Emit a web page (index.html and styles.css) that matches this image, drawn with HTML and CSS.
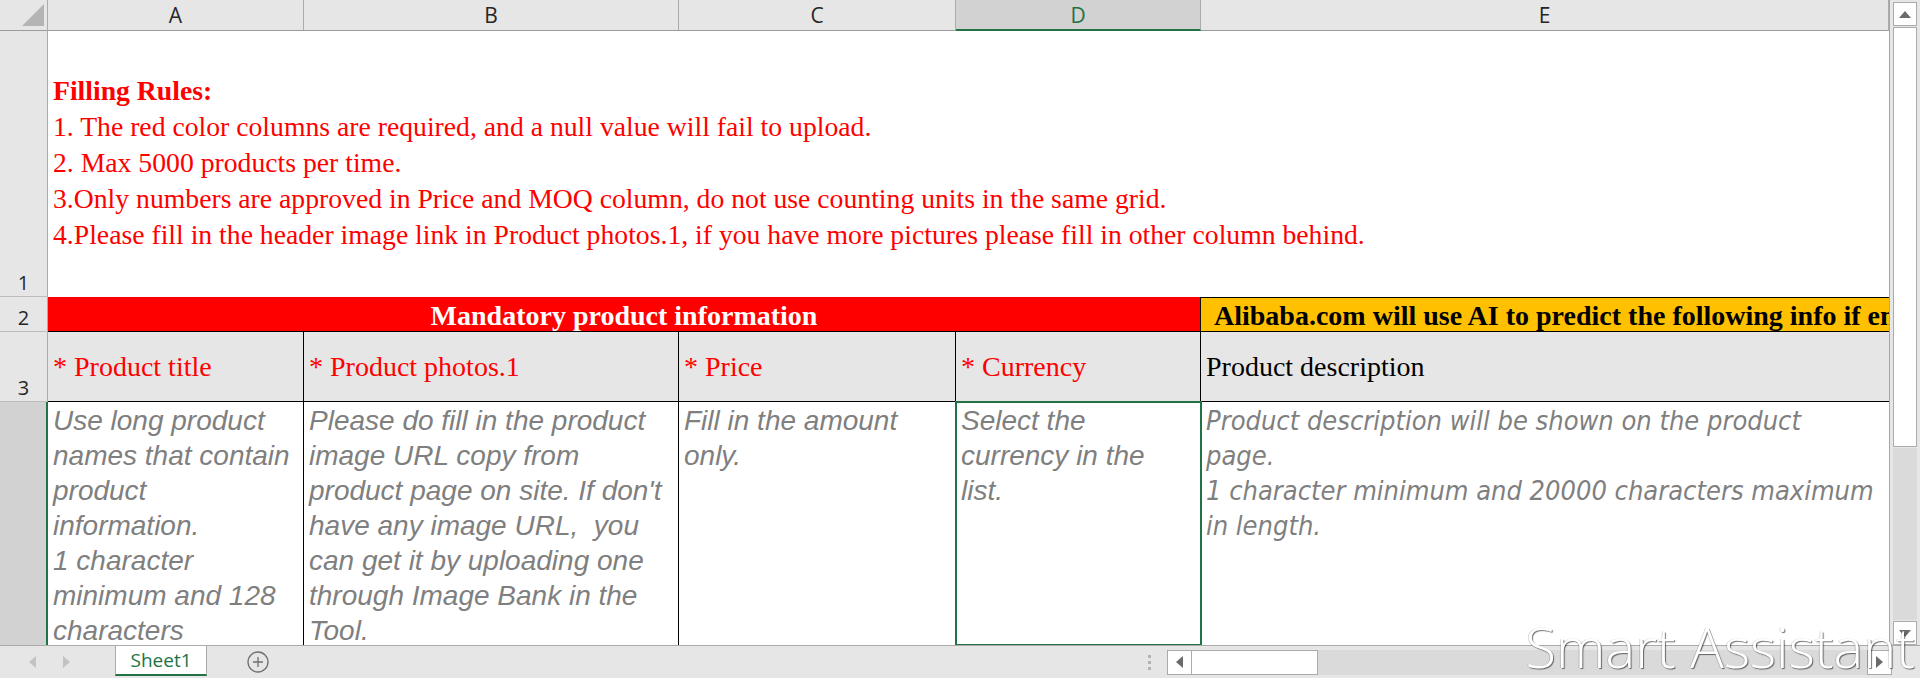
FILE: index.html
```html
<!DOCTYPE html>
<html lang="en">

<head>
    <meta charset="UTF-8">
    <title>Product upload template - Sheet1</title>
    <link rel="stylesheet" href="styles.css">
</head>

<body>

    <div class="workbook">
        <div class="main">
            <div class="grid">
                <!-- column headers -->
                <div class="corner">
                    <svg width="22" height="22" viewBox="0 0 22 22"><polygon points="0,22 22,0 22,22" fill="#b4b4b4"/></svg>
                </div>
                <div class="col-head">A</div>
                <div class="col-head">B</div>
                <div class="col-head">C</div>
                <div class="col-head current">D</div>
                <div class="col-head">E</div>

                <!-- row 1: rules -->
                <div class="row-head">1</div>
                <div class="rules">
                    <b>Filling Rules:</b><br>
                    1. The red color columns are required, and a null value will fail to upload.<br>
                    2. Max 5000 products per time.<br>
                    3.Only numbers are approved in Price and MOQ column, do not use counting units in the same grid.<br>
                    4.Please fill in the header image link in Product photos.1, if you have more pictures please fill in other column behind.
                </div>

                <!-- row 2: groups -->
                <div class="row-head">2</div>
                <div class="band mandatory">Mandatory product information</div>
                <div class="band ai">Alibaba.com will use AI to predict the following info if empty</div>

                <!-- row 3: field names -->
                <div class="row-head">3</div>
                <div class="field required">* Product title</div>
                <div class="field required">* Product photos.1</div>
                <div class="field required">* Price</div>
                <div class="field required">* Currency</div>
                <div class="field edge">Product description</div>

                <!-- row 4: hints -->
                <div class="row-head current"></div>
                <div class="hint">Use long product<br>names that contain<br>product<br>information.<br>1 character<br>minimum and 128<br>characters</div>
                <div class="hint">Please do fill in the product<br>image URL copy from<br>product page on site. If don't<br>have any image URL,&nbsp; you<br>can get it by uploading one<br>through Image Bank in the<br>Tool.</div>
                <div class="hint">Fill in the amount<br>only.</div>
                <div class="hint selected">Select the<br>currency in the<br>list.</div>
                <div class="hint wide edge">Product description will be shown on the product<br>page.<br>1 character minimum and 20000 characters maximum<br>in length.</div>
            </div>

            <div class="vscroll">
                <div class="sb-btn"><span class="tri up"></span></div>
                <div class="sb-thumb"></div>
                <div class="sb-track"></div>
                <div class="sb-btn"><span class="tri down"></span></div>
            </div>
        </div>

        <div class="tabbar">
            <div class="tab-nav">
                <span class="tri left light"></span>
                <span class="tri right light"></span>
            </div>
            <div class="sheet-tab">Sheet1</div>
            <div class="add-sheet">
                <svg width="22" height="22" viewBox="0 0 22 22">
                    <circle cx="11" cy="11" r="10" fill="none" stroke="#6f6f6f" stroke-width="1.3"/>
                    <path d="M11 6v10M6 11h10" stroke="#6f6f6f" stroke-width="1.3"/>
                </svg>
            </div>
            <div class="spacer"></div>
            <div class="grip"><span></span><span></span><span></span></div>
            <div class="hscroll">
                <div class="sb-btn"><span class="tri left"></span></div>
                <div class="sb-thumb"></div>
                <div class="sb-track"></div>
                <div class="sb-btn"><span class="tri right"></span></div>
            </div>
        </div>

        <div class="watermark">Smart Assistant</div>
    </div>

</body>

</html>
```

FILE: styles.css
```css
* {
    box-sizing: border-box;
}

html,
body {
    margin: 0;
}

body {
    width: 1920px;
    height: 678px;
    overflow: hidden;
    background: #fff;
    font-family: 'Open Sans', sans-serif;
}

.workbook {
    position: relative;
    height: 678px;
    display: flex;
    flex-direction: column;
}

.main {
    display: flex;
    height: 645px;
}

/* sheet grid */
.grid {
    display: grid;
    grid-template-columns: 48px 256px 375px 277px 245px 688px;
    grid-template-rows: 31px 266px 35px 70px 243px;
    border-right: 1px solid #a6a6a6;
}

.corner {
    background: #e6e6e6;
    border-right: 1px solid #ababab;
    border-bottom: 1px solid #9b9b9b;
    display: flex;
    justify-content: flex-end;
    align-items: flex-end;
    padding: 0 3px 4px 0;
}

.corner svg {
    display: block;
}

.col-head {
    background: #e6e6e6;
    border-right: 1px solid #ababab;
    border-bottom: 1px solid #9b9b9b;
    display: flex;
    align-items: center;
    justify-content: center;
    font-size: 21px;
    color: #262626;
}

.col-head:last-child {
    border-right: none;
}

.col-head.current {
    background: #d2d2d2;
    color: #217346;
    border-bottom: 2px solid #217346;
}

.row-head {
    background: #e6e6e6;
    border-right: 1px solid #ababab;
    border-bottom: 1px solid #bdbdbd;
    display: flex;
    align-items: flex-end;
    justify-content: center;
    font-size: 20px;
    line-height: 1;
    padding-bottom: 3px;
    color: #262626;
}

.row-head.current {
    background: #d2d2d2;
    border-right: 2px solid #217346;
    border-bottom: none;
}

.rules {
    grid-column: 2 / 7;
    padding: 42px 5px 0;
    font-family: 'Liberation Serif', serif;
    font-size: 27.7px;
    line-height: 36px;
    color: #f00;
    white-space: nowrap;
    overflow: hidden;
}

.band {
    display: flex;
    align-items: flex-end;
    font-family: 'Liberation Serif', serif;
    font-weight: bold;
    font-size: 28px;
    line-height: 31px;
    white-space: nowrap;
    overflow: hidden;
    border-bottom: 1px solid #000;
}

.band.mandatory {
    grid-column: 2 / 6;
    justify-content: center;
    background: #f00;
    color: #fff;
    border-right: 1px solid #000;
}

.band.ai {
    background: #ffc000;
    color: #000;
    border-top: 1px solid #000;
    padding-left: 13px;
}

.field {
    display: flex;
    align-items: center;
    padding-left: 5px;
    background: #e7e6e6;
    border-right: 1px solid #000;
    border-bottom: 1px solid #000;
    font-family: 'Liberation Serif', serif;
    font-size: 28px;
    line-height: 31px;
    white-space: nowrap;
    overflow: hidden;
    color: #000;
}

.field.required {
    color: #f00;
}

.hint {
    padding: 1px 5px 0;
    border-right: 1px solid #000;
    font-family: 'Liberation Sans', Arial, sans-serif;
    font-style: italic;
    font-size: 28px;
    line-height: 35px;
    color: #7f7f7f;
    white-space: nowrap;
    overflow: hidden;
}

.hint.wide {
    font-family: 'DejaVu Sans Condensed', 'DejaVu Sans', sans-serif;
    font-size: 27px;
}

.hint.selected {
    outline: 2px solid #217346;
    outline-offset: -1px;
}

.edge {
    border-right: none;
}

/* scroll bars */
.vscroll {
    width: 30px;
    background: #e6e6e6;
    display: flex;
    flex-direction: column;
    padding: 2px 3px 0;
    gap: 1px;
}

.sb-btn {
    display: flex;
    align-items: center;
    justify-content: center;
    background: #fff;
    border: 1px solid #ababab;
}

.vscroll .sb-btn {
    height: 24px;
}

.vscroll .sb-thumb {
    height: 420px;
    background: #fff;
    border: 1px solid #ababab;
}

.sb-track {
    flex: 1;
    background: #dadada;
}

.tri {
    width: 0;
    height: 0;
    border-style: solid;
    border-color: transparent;
}

.tri.up {
    border-width: 0 6px 7px;
    border-bottom-color: #6a6a6a;
}

.tri.down {
    border-width: 7px 6px 0;
    border-top-color: #6a6a6a;
}

.tri.left {
    border-width: 6px 7px 6px 0;
    border-right-color: #6a6a6a;
}

.tri.right {
    border-width: 6px 0 6px 7px;
    border-left-color: #6a6a6a;
}

.tri.left.light {
    border-right-color: #c3c3c3;
}

.tri.right.light {
    border-left-color: #c3c3c3;
}

/* sheet tabs */
.tabbar {
    height: 33px;
    display: flex;
    background: #e6e6e6;
    border-top: 1px solid #ababab;
}

.tab-nav {
    width: 115px;
    display: flex;
    align-items: center;
    gap: 27px;
    padding-left: 29px;
}

.sheet-tab {
    width: 92px;
    margin-bottom: 2px;
    display: flex;
    align-items: center;
    justify-content: center;
    background: #fff;
    border-left: 1px solid #ababab;
    border-right: 1px solid #ababab;
    border-bottom: 2px solid #217346;
    font-size: 19px;
    color: #217346;
}

.add-sheet {
    margin-left: 40px;
    display: flex;
    align-items: center;
}

.add-sheet svg {
    display: block;
}

.spacer {
    flex: 1;
}

.grip {
    display: flex;
    flex-direction: column;
    justify-content: center;
    gap: 3px;
    margin-right: 16px;
}

.grip span {
    width: 3px;
    height: 3px;
    background: #b3b3b3;
}

.hscroll {
    width: 725px;
    height: 25px;
    align-self: center;
    display: flex;
    margin-right: 28px;
}

.hscroll .sb-btn {
    width: 25px;
}

.hscroll .sb-thumb {
    width: 126px;
    background: #fff;
    border: 1px solid #ababab;
    border-left: none;
}

/* assistant overlay text */
.watermark {
    position: absolute;
    right: 5px;
    bottom: 4px;
    font-weight: 300;
    font-size: 56px;
    line-height: 1;
    color: #fff;
    text-shadow: 1px 1px 1px rgba(0, 0, 0, 0.55), -1px 0 0 rgba(0, 0, 0, 0.15);
    pointer-events: none;
}
```
